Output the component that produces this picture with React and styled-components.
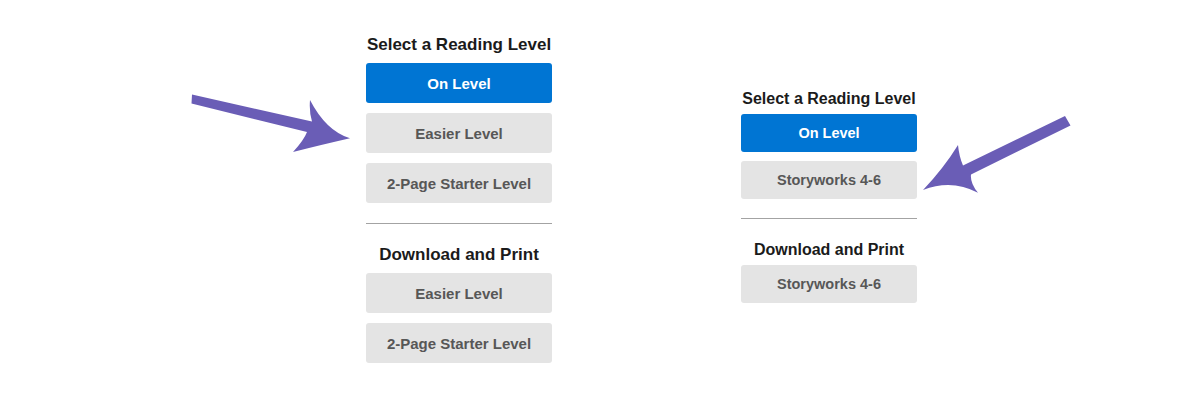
import styled, { createGlobalStyle } from "styled-components";

const GlobalStyle = createGlobalStyle`
  body {
    margin: 0;
    background: #ffffff;
    font-family: "Liberation Sans", Arial, sans-serif;
  }
`;

const Stage = styled.div`
  width: 1200px;
  height: 395px;
  display: flex;
  align-items: flex-start;
  padding-left: 190px;
  box-sizing: border-box;
  overflow: hidden;
`;

const ArrowSvg = styled.svg`
  flex: none;
  display: block;
  margin-top: ${(p) => p.$top}px;
  margin-left: ${(p) => p.$left || 0}px;
`;

const Panel = styled.div`
  flex: none;
  width: ${(p) => (p.$compact ? 176 : 186)}px;
  margin-top: ${(p) => (p.$compact ? 89 : 35)}px;
  margin-left: ${(p) => (p.$compact ? 189 : 14)}px;
  display: flex;
  flex-direction: column;
`;

const Heading = styled.h3`
  margin: 0 0 ${(p) => (p.$compact ? 6 : 8)}px;
  font-size: ${(p) => (p.$compact ? 16 : 17)}px;
  line-height: ${(p) => (p.$compact ? 19 : 20)}px;
  font-weight: 700;
  color: #1b1b1b;
  text-align: center;
  white-space: nowrap;
`;

const Heading2 = styled(Heading)`
  margin-bottom: ${(p) => (p.$compact ? 6 : 8)}px;
`;

const ButtonStack = styled.div`
  display: flex;
  flex-direction: column;
  gap: ${(p) => (p.$compact ? 9 : 10)}px;
`;

const LevelButton = styled.button`
  height: ${(p) => (p.$compact ? 38 : 40)}px;
  border: none;
  border-radius: 3px;
  padding: 0;
  display: flex;
  align-items: center;
  justify-content: center;
  font-family: "Liberation Sans", Arial, sans-serif;
  font-weight: 700;
  font-size: ${(p) => (p.$compact ? 14.5 : 15)}px;
  background: ${(p) => (p.$active ? "#0075d3" : "#e4e4e4")};
  color: ${(p) => (p.$active ? "#ffffff" : "#575757")};
  cursor: pointer;
`;

const Divider = styled.hr`
  border: none;
  height: 1px;
  background: #a3a3a3;
  margin: ${(p) => (p.$compact ? "19px 0 21px" : "20px 0 21px")};
`;

const LeftArrow = () => (
  <ArrowSvg $top={92} width="162" height="64" viewBox="0 0 162 64">
    <path
      d="M2 2.5 L122 29.5 Q119 20 120 8 Q136 39 160 46.3 Q135 52 103 60 Q114 48 117 40 L1.5 11.5 Z"
      fill="#6a5db6"
    />
  </ArrowSvg>
);

const RightArrow = () => (
  <ArrowSvg $top={110} $left={-2} width="160" height="90" viewBox="0 0 160 90">
    <path
      d="M150 6 L48 55.5 Q44 46 43 35 Q28.5 58.5 8 80 Q36.5 68.6 63 82.7 Q55 73 56 64.5 L155.5 15.5 Z"
      fill="#6a5db6"
    />
  </ArrowSvg>
);

const LevelPanel = ({ compact, read, print }) => (
  <Panel $compact={compact}>
    <Heading $compact={compact}>Select a Reading Level</Heading>
    <ButtonStack $compact={compact}>
      <LevelButton $compact={compact} $active>
        On Level
      </LevelButton>
      {read.map((label) => (
        <LevelButton key={label} $compact={compact}>
          {label}
        </LevelButton>
      ))}
    </ButtonStack>
    <Divider $compact={compact} />
    <Heading2 $compact={compact}>Download and Print</Heading2>
    <ButtonStack $compact={compact}>
      {print.map((label) => (
        <LevelButton key={label} $compact={compact}>
          {label}
        </LevelButton>
      ))}
    </ButtonStack>
  </Panel>
);

const App = () => {
  return (
    <>
      <GlobalStyle />
      <Stage>
        <LeftArrow />
        <LevelPanel
          read={["Easier Level", "2-Page Starter Level"]}
          print={["Easier Level", "2-Page Starter Level"]}
        />
        <LevelPanel compact read={["Storyworks 4-6"]} print={["Storyworks 4-6"]} />
        <RightArrow />
      </Stage>
    </>
  );
};

export default App;
